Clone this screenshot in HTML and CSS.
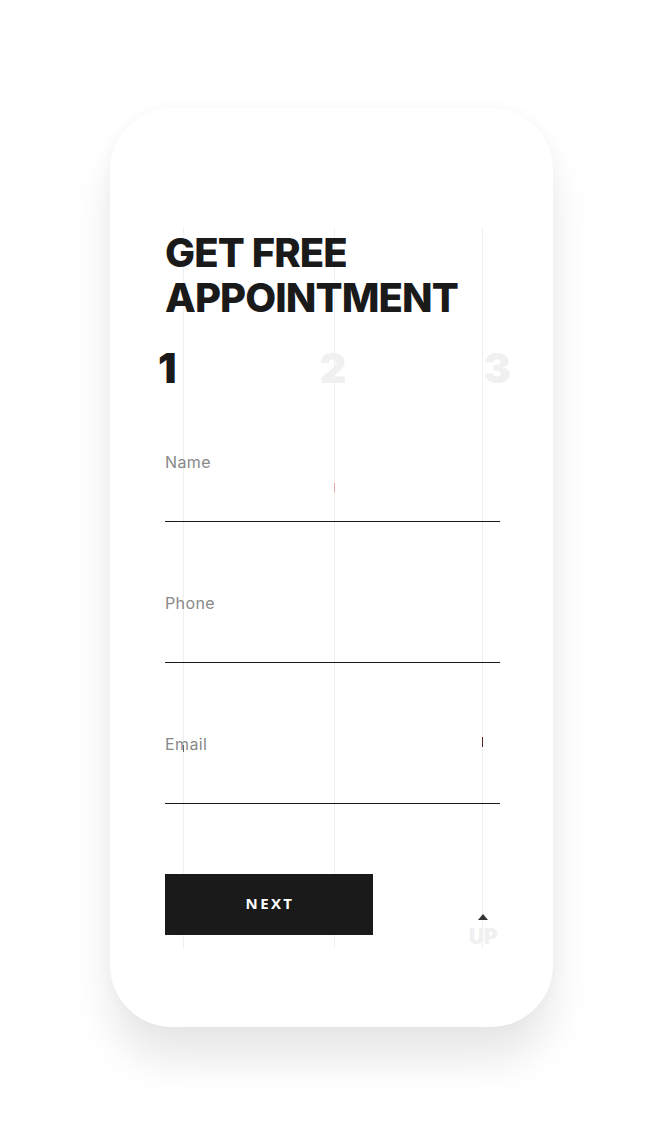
FILE: index.html
```html
<!DOCTYPE html>
<html lang="en">
<head>
<meta charset="utf-8">
<title>Get Free Appointment</title>
<link rel="stylesheet" href="styles.css">
</head>
<body>
<div class="phone">
  <div class="panel">
    <h1 class="title">GET FREE<br>APPOINTMENT</h1>
    <div class="steps">
      <span class="step active">1</span>
      <span class="step mid">2</span>
      <span class="step">3</span>
    </div>
    <form class="form">
      <div class="field"><label class="label">Name</label><div class="input"></div></div>
      <div class="field"><label class="label">Phone</label><div class="input"></div></div>
      <div class="field"><label class="label">Email</label><div class="input"></div></div>
      <div class="actions">
        <button type="button" class="next">NEXT</button>
        <div class="up"><span class="arrow"></span><span class="up-text">UP</span></div>
      </div>
    </form>
    <span class="mark mark-red"></span>
    <span class="mark mark-dark"></span>
    <span class="mark mark-grey"></span>
  </div>
</div>
</body>
</html>
```
FILE: styles.css
```css
html, body {
  margin: 0;
  padding: 0;
  background: #ffffff;
}
body {
  font-family: Inter, "Liberation Sans", sans-serif;
  width: 663px;
  height: 1136px;
  overflow: hidden;
}
.phone {
  box-sizing: border-box;
  width: 443px;
  height: 919px;
  margin: 108px 0 0 110px;
  padding: 120px 53px 0 55px;
  background: #ffffff;
  border-radius: 62px;
  box-shadow: 0 34px 40px rgba(0, 0, 0, 0.09), 0 0 18px rgba(0, 0, 0, 0.03);
}
.panel {
  position: relative;
  height: 720px;
  background:
    linear-gradient(#efefef, #efefef) 18px 0 / 1px 100% no-repeat,
    linear-gradient(#efefef, #efefef) 169px 0 / 1px 100% no-repeat,
    linear-gradient(#efefef, #efefef) 317px 0 / 1px 100% no-repeat;
}
.title {
  margin: 0;
  padding-top: 2px;
  font-size: 40px;
  line-height: 45px;
  font-weight: 800;
  color: #1a1a1a;
  letter-spacing: -0.9px;
}
.steps {
  display: flex;
  justify-content: space-between;
  margin: 27px -11px 0 -7px;
  font-size: 41px;
  line-height: 42px;
  font-weight: 900;
}
.step {
  color: #f0f0f0;
}
.step.mid {
  margin-left: 9px;
}
.step.active {
  color: #1a1a1a;
  letter-spacing: -3px;
}
.form {
  margin-top: 61px;
}
.field + .field {
  margin-top: 69px;
}
.label {
  display: block;
  font-size: 16px;
  line-height: 24px;
  letter-spacing: 0.4px;
  color: #888888;
}
.input {
  height: 47px;
  border-bottom: 1px solid #1a1a1a;
}
.actions {
  display: flex;
  justify-content: space-between;
  align-items: flex-start;
  margin-top: 70px;
}
.next {
  width: 208px;
  height: 61px;
  border: 0;
  border-radius: 0;
  background: #1a1a1a;
  color: #ffffff;
  font-family: "Open Sans", "Liberation Sans", sans-serif;
  font-size: 15px;
  font-weight: 700;
  letter-spacing: 2.4px;
  padding: 0 0 3px 2px;
}
.up {
  display: flex;
  flex-direction: column;
  align-items: center;
  margin: 40px 3px 0 0;
}
.arrow {
  width: 0;
  height: 0;
  border-left: 5px solid transparent;
  border-right: 5px solid transparent;
  border-bottom: 6px solid #333333;
}
.up-text {
  margin-top: 6px;
  font-size: 21px;
  line-height: 21px;
  font-weight: 900;
  letter-spacing: -0.5px;
  color: #f0f0f0;
}
.mark {
  position: absolute;
  width: 1px;
}
.mark-red {
  left: 169px;
  top: 255px;
  height: 9px;
  background: repeating-linear-gradient(#e88a8a 0 1px, #f4c4c4 1px 2px);
}
.mark-dark {
  left: 317px;
  top: 509px;
  height: 10px;
  background: #5a2222;
}
.mark-grey {
  left: 18px;
  top: 517px;
  height: 7px;
  background: #666666;
}
```
